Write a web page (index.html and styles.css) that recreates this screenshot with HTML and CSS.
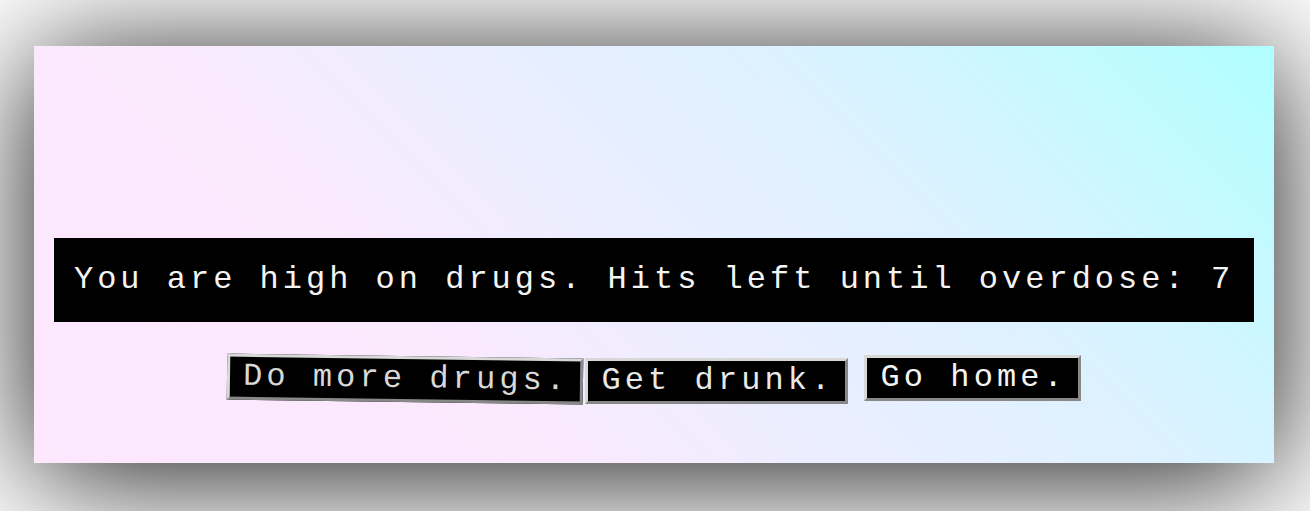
FILE: index.html
```html
<!DOCTYPE html>
<html lang="en">
<head>
<meta charset="utf-8">
<title>Drugs</title>
<link rel="stylesheet" href="styles.css">
</head>
<body>
  <main class="card">
    <p class="status">You are high on drugs. Hits left until overdose: 7</p>
    <div class="actions">
      <button class="btn btn-tilt">Do more drugs.</button>
      <button class="btn btn-low">Get drunk.</button>
      <button class="btn btn-far">Go home.</button>
    </div>
  </main>
</body>
</html>
```
FILE: styles.css
```css
html, body {
  margin: 0;
  background: #ffffff;
}

body {
  padding: 46px 36px 48px 34px;
  font-family: "Liberation Mono", "Courier New", monospace;
}

.card {
  display: flex;
  flex-direction: column;
  padding: 192px 20px 61px;
  background: linear-gradient(45deg, #fde8fe 0%, #fbe9fe 32%, #ebeeff 49%, #def1ff 68%, #d3f5ff 77%, #b0ffff 100%);
  box-shadow: 0 12px 120px rgba(0, 0, 0, 0.92);
}

.status {
  margin: 0;
  padding: 24px 0;
  background: #000;
  color: #f4f4f4;
  font-size: 32px;
  line-height: 36px;
  letter-spacing: 4px;
  text-align: center;
  white-space: nowrap;
}

.actions {
  display: flex;
  justify-content: center;
  align-items: center;
  gap: 2px;
  margin-top: 34px;
  height: 46px;
}

.btn {
  margin: 0;
  padding: 2px 11px 2px 13px;
  background: #000;
  color: #e8e8e8;
  font-family: "Liberation Mono", "Courier New", monospace;
  font-size: 32px;
  line-height: 36px;
  letter-spacing: 4.1px;
  border: 3px solid;
  border-color: #d8d8d8 #888888 #888888 #d8d8d8;
  white-space: nowrap;
  cursor: pointer;
}

.btn-tilt {
  transform: rotate(0.8deg);
  color: #d8d8d8;
}

.btn-low {
  margin-top: 4px;
}

.btn-far {
  margin-left: 14px;
  margin-bottom: 2px;
  color: #f4f4f4;
}
```
